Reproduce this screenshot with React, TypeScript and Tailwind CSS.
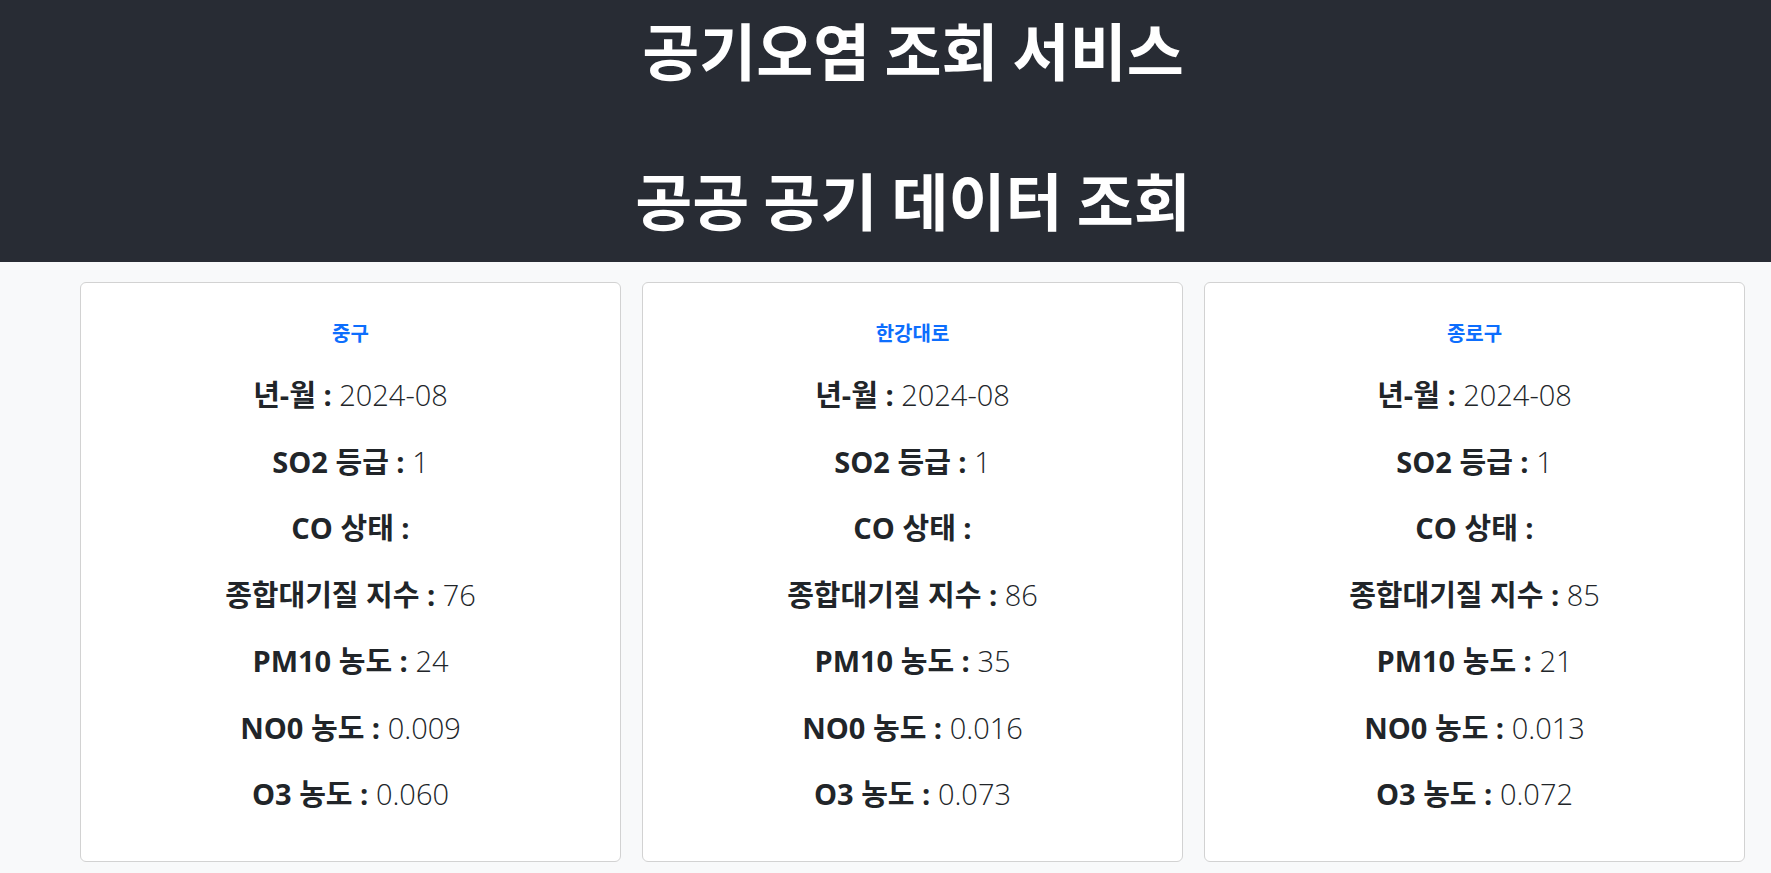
import React from "react";

type Station = {
  name: string;
  ym: string;
  so2: string;
  co: string;
  khai: string;
  pm10: string;
  no2: string;
  o3: string;
};

const stations: Station[] = [
  { name: "중구", ym: "2024-08", so2: "1", co: "", khai: "76", pm10: "24", no2: "0.009", o3: "0.060" },
  { name: "한강대로", ym: "2024-08", so2: "1", co: "", khai: "86", pm10: "35", no2: "0.016", o3: "0.073" },
  { name: "종로구", ym: "2024-08", so2: "1", co: "", khai: "85", pm10: "21", no2: "0.013", o3: "0.072" },
];

function Row({ label, value }: { label: string; value: string }) {
  return (
    <div className="h-[34px] leading-[34px] text-[29px] text-[#212529] whitespace-nowrap">
      <span className="font-bold">{label} : </span>
      <span className="font-light">{value}</span>
    </div>
  );
}

function Card({ s }: { s: Station }) {
  return (
    <div className="flex-1 bg-white border border-[#d2d2d2] rounded-[6px] pt-[37px] pb-[50px] flex flex-col items-center">
      <div
        className="h-[26px] leading-[26px] text-[20px] font-bold text-[#0d6efd]"
        style={{ fontFamily: '"Noto Sans CJK KR", sans-serif' }}
      >
        {s.name}
      </div>
      <div className="mt-[32px] flex flex-col items-center gap-[32.5px]">
        <Row label="년-월" value={s.ym} />
        <Row label="SO2 등급" value={s.so2} />
        <Row label="CO 상태" value={s.co} />
        <Row label="종합대기질 지수" value={s.khai} />
        <Row label="PM10 농도" value={s.pm10} />
        <Row label="NO0 농도" value={s.no2} />
        <Row label="O3 농도" value={s.o3} />
      </div>
    </div>
  );
}

export default function App() {
  return (
    <div
      className="min-h-screen bg-[#f8f9fa]"
      style={{ fontFamily: '"Open Sans", "Noto Sans CJK KR", sans-serif' }}
    >
      <header
        className="bg-[#282c34] text-white flex flex-col items-center pl-[55px] pt-[16px] pb-[29px] gap-[83px]"
        style={{ fontFamily: '"Noto Sans CJK KR", sans-serif' }}
      >
        <h1 className="text-[62px] leading-[67px] font-bold">공기오염 조회 서비스</h1>
        <h1 className="text-[62px] leading-[67px] font-bold">공공 공기 데이터 조회</h1>
      </header>
      <main className="pl-[80px] pr-[26px] pt-[20px] flex gap-[21px]">
        {stations.map((s) => (
          <Card key={s.name} s={s} />
        ))}
      </main>
    </div>
  );
}
